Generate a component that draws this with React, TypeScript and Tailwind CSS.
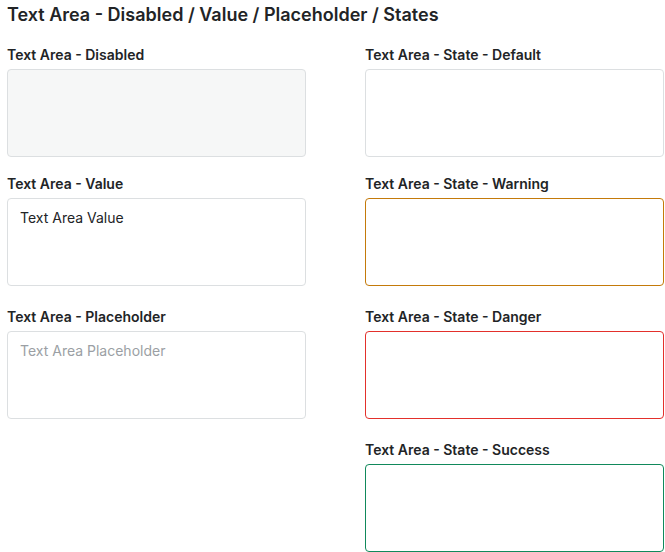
const fieldBase =
  "block w-full h-[88px] resize-none rounded-[4px] border px-[12px] py-[9px] text-[14px] leading-[20px] text-[#222426] outline-none placeholder:text-[#9b9fa4]";

const Field = ({ label, className, value, placeholder, disabled }: {
  label: string;
  className: string;
  value?: string;
  placeholder?: string;
  disabled?: boolean;
}) => (
  <div className="flex flex-col">
    <label className="text-[14px] leading-[16px] font-semibold text-[#222426] mb-[6px]">{label}</label>
    <textarea
      className={`${fieldBase} ${className}`}
      defaultValue={value}
      placeholder={placeholder}
      disabled={disabled}
      readOnly={!disabled}
    />
  </div>
);

export default function App() {
  return (
    <div className="min-h-screen bg-white pt-[5px] px-[7px] font-['Inter','Liberation_Sans',sans-serif]">
      <h1 className="text-[18px] leading-[20px] font-semibold text-[#222426]">
        Text Area - Disabled / Value / Placeholder / States
      </h1>

      <div className="grid grid-cols-[299px_299px] gap-x-[59px] mt-[22px]">
        {/* left column */}
        <div className="flex flex-col">
          <Field label="Text Area - Disabled" className="border-[#dcdfe1] bg-[#f6f7f7]" disabled />
          <div className="mt-[19px]">
            <Field label="Text Area - Value" className="border-[#dcdfe1] bg-white" value="Text Area Value" />
          </div>
          <div className="mt-[23px]">
            <Field label="Text Area - Placeholder" className="border-[#dcdfe1] bg-white" placeholder="Text Area Placeholder" />
          </div>
        </div>

        {/* right column */}
        <div className="flex flex-col">
          <Field label="Text Area - State - Default" className="border-[#dcdfe1] bg-white" />
          <div className="mt-[19px]">
            <Field label="Text Area - State - Warning" className="border-[#c47a0a] bg-white" />
          </div>
          <div className="mt-[23px]">
            <Field label="Text Area - State - Danger" className="border-[#e3302b] bg-white" />
          </div>
          <div className="mt-[23px]">
            <Field label="Text Area - State - Success" className="border-[#11895b] bg-white" />
          </div>
        </div>
      </div>
    </div>
  );
}
